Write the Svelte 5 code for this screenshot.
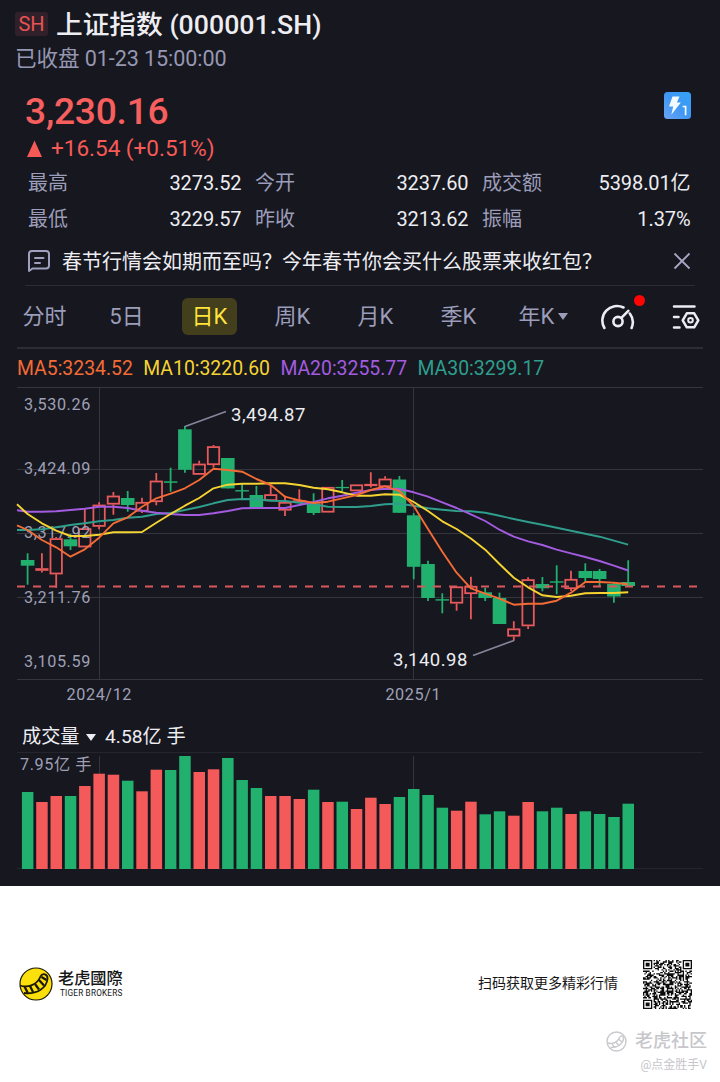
<script>
  const tabs = ['分时', '5日', '日K', '周K', '月K', '季K', '年K'];
  let active = $state('日K');
  let showNews = $state(true);

  const quotes = [
    ['最高', '3273.52'], ['今开', '3237.60'], ['成交额', '5398.01亿'],
    ['最低', '3229.57'], ['昨收', '3213.62'], ['振幅', '1.37%']
  ];

  const averages = [
    { label: 'MA5:3234.52', color: '#f36b35' },
    { label: 'MA10:3220.60', color: '#f5d432' },
    { label: 'MA20:3255.77', color: '#a35be0' },
    { label: 'MA30:3299.17', color: '#2f9e8c' }
  ];

  // [up, high, bodyTop, bodyBottom, low] in chart units
  const candles = [
    [0, 553.3, 560, 565.7, 584.7], [1, 553.3, 568.3, 570.7, 572.5], [1, 537, 538.3, 574.3, 587.7],
    [0, 534, 539.3, 546.3, 550], [1, 509, 528.3, 547.3, 547.3], [1, 502.3, 504.7, 526.7, 529.3],
    [1, 492, 495.7, 504.5, 514.7], [0, 491, 498, 505, 511.7], [1, 497.7, 502, 511.5, 513],
    [1, 473, 480.7, 502, 505.3], [0, 467.7, 481.3, 482.8, 491.7], [0, 426, 429.3, 469.8, 472.7],
    [1, 460.7, 463.7, 474.7, 474.7], [1, 445, 446.3, 465, 467.5], [0, 458, 458, 488.4, 488.4],
    [0, 483.3, 490.1, 491.5, 498.5], [0, 486, 495, 508, 508.5], [1, 485, 494.3, 501, 501],
    [1, 495.7, 502, 510.5, 516], [1, 489.3, 500.3, 501.6, 501.6], [0, 493.3, 503.3, 513, 515],
    [1, 487, 487, 512.5, 512.5], [0, 480, 486.9, 488.2, 491.5], [1, 484.5, 484.5, 491.2, 491.2],
    [1, 472.3, 484, 486, 487.5], [1, 476.3, 478.7, 487, 487], [0, 476, 479.5, 512.8, 512.8],
    [0, 513, 515.3, 566.8, 579.3], [0, 560.7, 564, 598, 601], [0, 593.3, 599.2, 600.6, 613.3],
    [1, 586.5, 586.5, 603.5, 610.7], [1, 576.7, 586, 594, 619.3], [0, 587.7, 592.3, 598, 601],
    [0, 592.7, 598, 624, 624], [1, 621.3, 628.5, 636.5, 640.7], [1, 577.3, 579.3, 626.2, 629],
    [0, 577, 584, 588.3, 591.3], [0, 565.3, 581.3, 582.7, 594.3], [1, 570.7, 579, 589, 591],
    [0, 563.3, 571, 578, 581.7], [0, 569, 571, 579, 586], [0, 582.7, 584, 596.5, 602.7],
    [0, 560.3, 582, 586, 586]
  ];

  // first value of every line sits on the left edge of the plot
  const lines = [
    { color: '#2f9e8c', values: [530, 530, 529.3, 527.3, 525, 523.3, 521.3, 520, 517.7, 516.7, 514, 513, 510, 507, 503.3, 500, 499, 499.3, 500.7, 501, 502.7, 504.3, 506.7, 507, 507, 506, 504.3, 503.7, 505.7, 508.3, 509.7, 511, 511.2, 512.7, 515.7, 519, 522, 524.7, 527.7, 530.7, 533.7, 536.7, 540.7, 544.7] },
    { color: '#a35be0', values: [510.3, 511.7, 511.7, 511.3, 510, 508.7, 506.7, 506.7, 508, 510.7, 512.7, 514, 515, 515, 513.3, 511, 508.3, 508, 508, 508, 505, 502, 498.3, 495.7, 492.7, 490, 488.7, 489, 492.3, 496.7, 502.3, 508, 514.3, 521, 529.7, 536.7, 541.3, 545, 549.7, 553.3, 557, 561, 565.7, 570.5] },
    { color: '#f5d432', values: [504.3, 514, 523.3, 530.7, 536, 536, 534.7, 532.3, 532.3, 532, 522.7, 514, 505.7, 498, 488.3, 484.7, 483.7, 483.7, 483.3, 483.3, 485, 487.7, 489.3, 492.3, 495.7, 495.7, 494.3, 494.7, 502, 511, 521.3, 529, 538.5, 549.7, 564, 577.7, 587.3, 595.3, 597, 595.7, 593.3, 593, 593, 592.3] },
    { color: '#f36b35', values: [525.3, 530, 540, 547.3, 556.7, 549.3, 537.7, 523.3, 517.3, 506.7, 498.3, 493.7, 488.3, 480, 468.7, 470, 471.7, 479, 485, 496.7, 500.3, 503, 501.7, 498.3, 495, 490, 486.3, 491, 506, 529, 551.7, 572.7, 588.3, 593.7, 598.7, 604.7, 603.7, 603.7, 600.7, 592.7, 582, 582, 582.7, 584.3] }
  ];

  const volumes = [
    792, 802, 796, 796, 786, 773.7, 774.7, 780.7, 791.3, 769.7, 770, 756, 772, 769.3, 758, 780, 788,
    796, 796, 799, 789.7, 802, 801.7, 809, 797.7, 804, 797, 789, 795, 807.7, 810.7, 801.7, 814.3,
    811.3, 815.7, 802, 811.3, 807.7, 814, 811.3, 814, 817, 803.7
  ];

  const priceTicks = [
    ['3,530.26', 410.3], ['3,424.09', 474.3], ['3,317.92', 538], ['3,211.76', 602.5], ['3,105.59', 666.5]
  ];

  const cx = (i) => 27.6 + i * 14.3;
  const points = (values) =>
    values.map((v, i) => `${i === 0 ? 17 : cx(i - 1).toFixed(1)},${v}`).join(' ');

  // QR modules: three finder squares, the rest is filler data
  const QR = 37;
  function finder(x, y, ox, oy) {
    const dx = x - ox, dy = y - oy;
    if (dx < -1 || dy < -1 || dx > 7 || dy > 7) return null;
    const d = Math.max(Math.abs(dx - 3), Math.abs(dy - 3));
    return d === 3 || d <= 1;
  }
  function buildQr() {
    let path = '';
    let seed = 20250123;
    for (let y = 0; y < QR; y++) {
      for (let x = 0; x < QR; x++) {
        seed = (seed * 1103515245 + 12345) % 2147483648;
        const on = finder(x, y, 0, 0) ?? finder(x, y, QR - 7, 0) ?? finder(x, y, 0, QR - 7)
          ?? seed / 2147483648 > 0.47;
        if (on) path += `M${x} ${y}h1v1h-1z`;
      }
    }
    return path;
  }
  const qrPath = buildQr();
</script>

<div class="quote">
  <header>
    <div class="title"><span class="market">SH</span><h1>上证指数 (000001.SH)</h1></div>
    <div class="status">已收盘 01-23 15:00:00</div>
  </header>

  <section class="price-row">
    <div>
      <div class="price">3,230.16</div>
      <div class="change">
        <svg width="15" height="17" viewBox="0 0 15 17"><path d="M7.5 0.5L15 17H0z" fill="#f65a57" /></svg>
        <span>+16.54 (+0.51%)</span>
      </div>
    </div>
    <svg width="27" height="27" viewBox="0 0 27 27">
      <defs>
        <linearGradient id="lv" x1="0" y1="1" x2="1" y2="0">
          <stop offset="0" stop-color="#6aa4f5" />
          <stop offset=".5" stop-color="#3f97f2" />
          <stop offset="1" stop-color="#35a2f8" />
        </linearGradient>
      </defs>
      <rect width="27" height="27" rx="3.5" fill="url(#lv)" />
      <path d="M8.5 4.5h7l-2.6 6h4L7.3 22.7l1.9-8.2H5z" fill="#f4faff" />
      <path d="M18.6 14.5h3v8.8" fill="none" stroke="#f4faff" stroke-width="1.7" />
    </svg>
  </section>

  <dl class="stats">
    {#each quotes as [name, value]}
      <div><dt>{name}</dt><dd>{value}</dd></div>
    {/each}
  </dl>

  {#if showNews}
    <div class="news">
      <svg width="24" height="24" viewBox="0 0 24 24" fill="none" stroke="#9fa0bd" stroke-width="2" stroke-linecap="round" stroke-linejoin="round">
        <path d="M2 22V5a3 3 0 0 1 3-3h14a3 3 0 0 1 3 3v11.5a3 3 0 0 1-3 3H5.500z" />
        <path d="M8 9h8.5M8 14h5" />
      </svg>
      <span>春节行情会如期而至吗？今年春节你会买什么股票来收红包？</span>
      <button aria-label="关闭" onclick={() => (showNews = false)}>
        <svg width="18" height="18" viewBox="0 0 18 18" stroke="#a6a7c4" stroke-width="1.8"><path d="M1.5 1.5l15 15M16.5 1.5l-15 15" /></svg>
      </button>
    </div>
  {/if}

  <nav>
    {#each tabs as tab}
      <button class="tab" class:active={active === tab} onclick={() => (active = tab)}>
        <span>{tab}</span>{#if tab === '年K'}<i class="caret"></i>{/if}
      </button>
    {/each}
    <div class="tools">
      <div class="gauge">
        <svg width="34" height="28" viewBox="0 0 34 28" fill="none" stroke="#ececf2" stroke-width="2.6" stroke-linecap="round">
          <path d="M3.4 25A14.6 14.6 0 0 1 22.500 4.5" />
          <path d="M28.8 10.5A14.6 14.6 0 0 1 30.6 25" />
          <circle cx="17" cy="18.5" r="4.6" />
          <path d="M20.6 14.7L27.3 7.8" />
        </svg>
        <i class="dot"></i>
      </div>
      <svg width="28" height="26" viewBox="0 0 28 26" fill="none" stroke="#ececf2" stroke-width="2.5" stroke-linecap="round" stroke-linejoin="round">
        <path d="M2 2.5h20.5M2 13h4.5M2 23.5h5.5" />
        <path d="M14.8 9.3h7.4l4.1 7-4.1 7h-7.4l-4.1-7z" />
        <circle cx="18.5" cy="16.3" r="2.3" stroke-width="2" />
      </svg>
    </div>
  </nav>

  <div class="averages">
    {#each averages as ma}
      <span style="color: {ma.color}">{ma.label}</span>
    {/each}
  </div>

  <svg class="chart" width="720" height="333" viewBox="0 387 720 333">
    <g stroke="#34353d" stroke-width="1">
      {#each [387.5, 469.5, 533.5, 597.5, 679.5] as y}
        <line x1="17" x2="703" y1={y} y2={y} />
      {/each}
      <line x1="99.5" x2="99.5" y1="387" y2="679" />
      <line x1="413.5" x2="413.5" y1="387" y2="679" />
    </g>
    {#each candles as [up, high, top, bottom, low], i}
      {@const x = cx(i)}
      {#if up}
        <g stroke="#e8595b" stroke-width="1.8" fill="none">
          <path d="M{x} {high}V{top}M{x} {bottom}V{low}" />
          <rect x={x - 5.7} y={top + 0.8} width="11.4" height={Math.max(bottom - top - 1.6, 0.2)} />
        </g>
      {:else}
        <path d="M{x} {high}V{low}" stroke="#22b06e" stroke-width="1.8" />
        <rect x={x - 6.8} y={top} width="13.6" height={bottom - top} fill="#22b06e" />
      {/if}
    {/each}
    <line x1="17" x2="697" y1="586.5" y2="586.5" stroke="#d9585b" stroke-width="2" stroke-dasharray="8 8" />
    <g class="axis">
      {#each priceTicks as [label, y]}
        <text x="24" {y}>{label}</text>
      {/each}
      <text x="99.3" y="700" text-anchor="middle">2024/12</text>
      <text x="413.3" y="700" text-anchor="middle">2025/1</text>
    </g>
    {#each lines as line}
      <polyline points={points(line.values)} fill="none" stroke={line.color} stroke-width="1.9" stroke-linejoin="round" />
    {/each}
    <path d="M185 426.5L226 411.5M473 655.5L514 640.5" stroke="#85869c" stroke-width="1.7" />
    <g class="callout">
      <text x="231" y="420.5">3,494.87</text>
      <text x="393" y="665.5">3,140.98</text>
    </g>
  </svg>

  <div class="volume-head">
    <span>成交量</span><i class="caret"></i><span>4.58亿 手</span>
  </div>
  <svg class="chart" width="720" height="134" viewBox="0 752 720 134">
    <path d="M17 752.5H703M17 868.5H703" stroke="#24252d" />
    <path d="M99.5 756V869M413.5 756V869" stroke="#34353d" />
    <g class="axis"><text x="20" y="770">7.95亿 手</text></g>
    {#each volumes as top, i}
      <rect x={cx(i) - 5.7} y={top} width="11.5" height={869 - top} fill={candles[i][0] ? '#f35a59' : '#22b06e'} />
    {/each}
  </svg>
</div>

<footer>
  <div class="share">
    <div class="brand">
      <svg width="34" height="34" viewBox="0 0 34 34">
        <circle cx="17" cy="17" r="16" fill="#fbe00c" stroke="#1c1900" stroke-width="1.2" />
        <path d="M1 18.5C9 21 18 18 21.5 9.5C23.5 5.5 29 7 28.5 12C27.5 21 18 27.5 5 26" fill="none" stroke="#1c1900" stroke-width="1.8" />
        <path d="M5.5 19.5l3.2 6.2M11 19l3 6M16 17l4 5.5M20 13l5 5.5M22.5 10l5 3" stroke="#1c1900" stroke-width="2.3" />
      </svg>
      <div class="brand-name">
        <strong>老虎國際</strong>
        <small>TIGER BROKERS</small>
      </div>
    </div>
    <div class="scan">
      <span>扫码获取更多精彩行情</span>
      <svg width="49" height="49" viewBox="0 0 {QR} {QR}"><path d={qrPath} fill="#0c0c0c" /></svg>
    </div>
  </div>
  <div class="watermark">
    <div class="community">
      <svg width="21" height="21" viewBox="0 0 21 21" fill="none" stroke="#c9c9ce" stroke-width="1.4">
        <circle cx="10.5" cy="10.5" r="9.5" />
        <path d="M1.5 12c5 1.5 10-.5 12-5.500 1.5-2.500 4.500-1.500 4 1.500-.7 5-6.500 9-13 8.500M6 12.500l2 3.500M10 11l2.500 3.500M13 8.500l3 2.500" />
      </svg>
      <span>老虎社区</span>
    </div>
    <div class="author">@点金胜手V</div>
  </div>
</footer>

<style>
  :global(body) {
    margin: 0;
    background: #fff;
    font-family: Roboto, "Noto Sans CJK SC", sans-serif;
  }
  .quote {
    width: 720px;
    height: 886px;
    background: #16171f;
    color: #ededf2;
    overflow: hidden;
  }
  header {
    padding: 4px 15px 0;
  }
  .title {
    display: flex;
    align-items: center;
    gap: 8px;
    height: 42px;
  }
  .market {
    width: 33px;
    height: 24px;
    margin-top: -3px;
    line-height: 25px;
    text-align: center;
    font-size: 20px;
    color: #e85354;
    background: #30202a;
    border-radius: 3px;
  }
  h1 {
    margin: 0;
    font-size: 26.7px;
    font-weight: 500;
    line-height: 42px;
  }
  .status {
    height: 26px;
    line-height: 26px;
    font-size: 21.6px;
    letter-spacing: -0.1px;
    color: #9697b2;
  }
  .price-row {
    display: flex;
    justify-content: space-between;
    padding: 20px 29px 0 25px;
  }
  .price {
    height: 40px;
    font-size: 37.2px;
    font-weight: 500;
    letter-spacing: -0.25px;
    line-height: 38px;
    color: #f65f5e;
  }
  .change {
    display: flex;
    align-items: center;
    gap: 9px;
    height: 32px;
    padding-left: 2px;
    font-size: 22.5px;
    color: #f65a57;
  }
  .stats {
    display: grid;
    grid-template-columns: 213.5px 213.5px 208.5px;
    column-gap: 13.5px;
    margin: 1px 0 0;
    padding-left: 28px;
    font-size: 20px;
    line-height: 36px;
  }
  .stats div {
    display: flex;
    justify-content: space-between;
  }
  dt { color: #9c9db9; }
  dd {
    margin: 0;
    letter-spacing: -0.1px;
  }
  button {
    padding: 0;
    border: none;
    background: none;
    font: inherit;
    color: inherit;
    cursor: pointer;
  }
  .news {
    display: flex;
    align-items: center;
    height: 48px;
    margin: 0 25px;
    padding: 0 4px 0 2px;
    border-bottom: 1px solid #2b2c35;
    font-size: 20px;
  }
  .news span {
    flex: 1;
    margin-left: 11px;
    line-height: 46px;
    padding-top: 2px;
    white-space: nowrap;
  }
  .news button {
    display: flex;
  }
  nav {
    display: flex;
    align-items: center;
    height: 61px;
    margin: 0 17px;
    border-bottom: 2px solid #2c2d35;
    font-size: 22px;
    color: #9c9db9;
  }
  .tab {
    display: flex;
    align-items: center;
    justify-content: center;
    width: 83px;
    height: 37px;
    line-height: 37px;
  }
  .tab:first-child {
    width: 81px;
    margin-left: -13px;
  }
  .tab.active span {
    padding: 0 9.5px;
    background: #433e1c;
    border-radius: 6px;
    color: #ffe43a;
  }
  .caret {
    width: 0;
    height: 0;
    margin-left: 4px;
    border: 5px solid transparent;
    border-top: 7px solid currentColor;
    border-bottom: none;
  }
  .tab .caret {
    margin-right: -4px;
  }
  .tools {
    display: flex;
    align-items: center;
    gap: 37px;
    margin-left: 17.5px;
  }
  .gauge {
    position: relative;
    display: flex;
  }
  .dot {
    position: absolute;
    top: -8px;
    right: -10px;
    width: 11px;
    height: 11px;
    border-radius: 50%;
    background: #fb0505;
  }
  .averages {
    display: flex;
    gap: 10.4px;
    height: 38px;
    padding: 1px 0 0 17px;
    box-sizing: border-box;
    line-height: 38px;
    font-size: 19.4px;
  }
  .chart {
    display: block;
  }
  .axis {
    font-size: 16.2px;
    letter-spacing: 0.6px;
    fill: #9fa0b6;
  }
  .callout {
    font-size: 18.5px;
    letter-spacing: 0.5px;
    fill: #ededf2;
  }
  .volume-head {
    display: flex;
    align-items: center;
    height: 32px;
    padding: 2px 0 0 22px;
    box-sizing: border-box;
    font-size: 19.2px;
    line-height: 34px;
  }
  .volume-head .caret {
    margin: 0 9px 0 6.5px;
  }
  footer {
    width: 720px;
    height: 196px;
    background: #fff;
    overflow: hidden;
  }
  .share {
    display: flex;
    align-items: center;
    justify-content: space-between;
    margin-top: 73px;
    padding: 0 28px 0 19px;
    height: 50px;
    color: #151515;
  }
  .brand, .scan {
    display: flex;
    align-items: center;
  }
  .brand-name {
    display: flex;
    flex-direction: column;
    margin-left: 5px;
  }
  .brand-name strong {
    font-size: 16.2px;
    line-height: 18px;
    font-weight: 500;
  }
  .brand-name small {
    font-size: 8.2px;
    line-height: 11px;
    padding-left: 2px;
    letter-spacing: 0.2px;
  }
  .scan {
    gap: 25px;
    font-size: 14px;
  }
  .scan span {
    margin-top: -4px;
  }
  .watermark {
    display: flex;
    flex-direction: column;
    align-items: flex-end;
    margin-top: 20px;
    padding-right: 13px;
    color: #c6c6cb;
  }
  .community {
    display: flex;
    align-items: center;
    gap: 8px;
    height: 24px;
    font-size: 18px;
    font-weight: 500;
    line-height: 24px;
  }
  .author {
    font-size: 12px;
    line-height: 25px;
  }
</style>
